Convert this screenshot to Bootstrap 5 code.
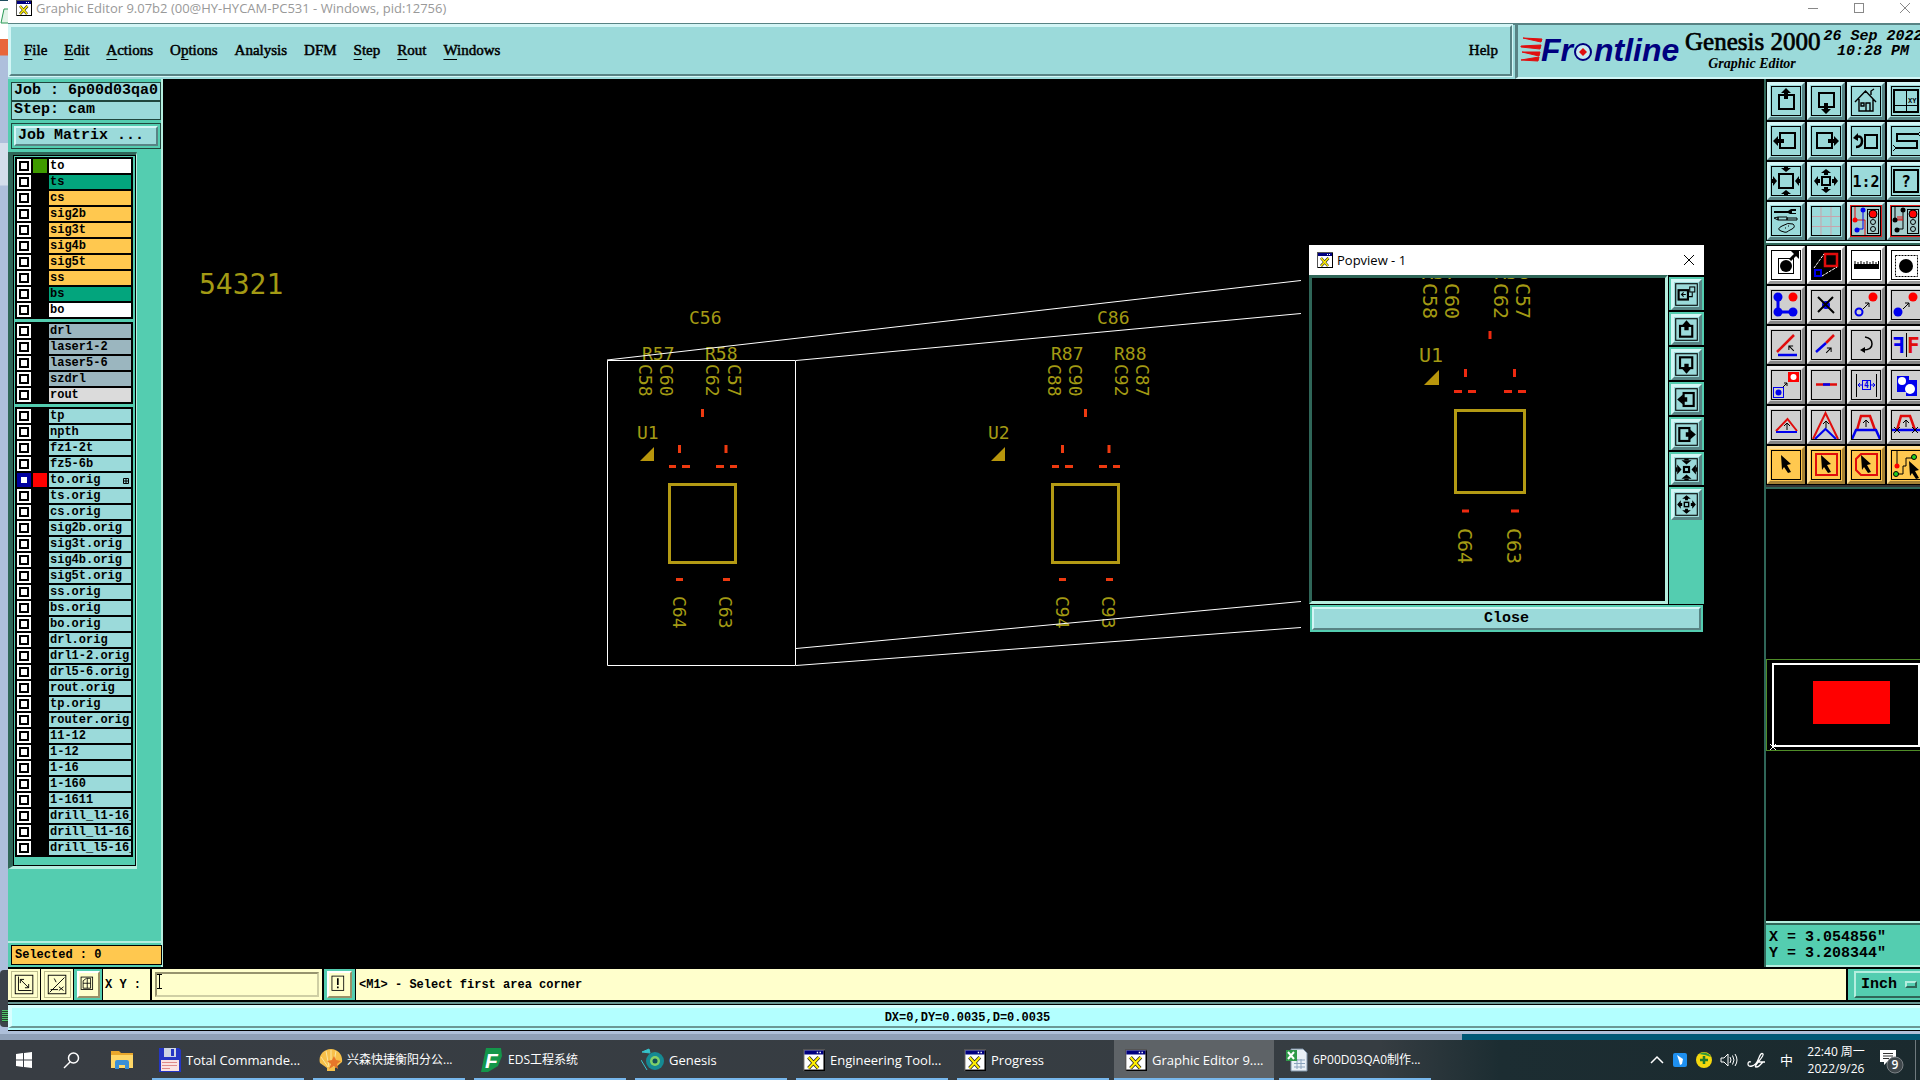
<!DOCTYPE html>
<html lang="zh-CN">
<head>
<meta charset="utf-8">
<meta name="viewport" content="width=device-width, initial-scale=1">
<title>Graphic Editor</title>
<link href="https://cdn.jsdelivr.net/npm/bootstrap@5.3.0/dist/css/bootstrap.min.css" rel="stylesheet">
<style>
:root{--teal:#54cdb0;--teal-hi:#b5eedf;--teal-lo:#2f6658;--aqua:#9bdada;--aqua-hi:#d3f6f6;--aqua-lo:#588384;--cream:#ffffcc;--gold:#ffc84f}
body{background:#aebfd9;font-family:"Open Sans","Noto Sans CJK SC",sans-serif;font-size:13px;line-height:16px;color:#000;overflow:hidden}
button,input,select{border-radius:0;color:inherit}
.mono{font-family:"Liberation Mono",monospace;font-weight:700;font-size:15px;line-height:16px}
.mono-sm{font-family:"Liberation Mono",monospace;font-weight:700;font-size:12px;line-height:14px}
.edge{width:8px;background:linear-gradient(#fff 0 39px,#e8663a 39px 55px,#aebfdc 56px 143px,#d4deec 143px 185px,#aebfdc 186px)}
.edge-meter{width:8px;height:57px;margin-bottom:4px;background:#3c434b;border-radius:4px 0 0 4px;padding:40px 0 4px 2px}
.edge-meter div{height:12px;background:repeating-linear-gradient(#4dc36a 0 1px,#26402f 1px 2px)}
.caption{height:23px;background:#fff;color:#999;padding:0 9px 7px 8px}
.caption button{background:none;border:0;padding:0;width:12px;height:14px;line-height:0}
.menubar{height:56px;background:var(--aqua);border-top:2px solid var(--aqua-lo)}
.menu-box{border:2px solid;border-color:var(--aqua-hi) var(--aqua-lo) var(--aqua-lo) var(--aqua-hi);outline:1px solid var(--aqua-hi);margin:0 3px 3px 1px;padding:0 12px 2px 13px}
.menu-box a{font-family:"Liberation Serif",serif;font-size:15px;line-height:18px;color:#000;text-decoration:none;-webkit-text-stroke:.5px #000}
.menu-box u{text-underline-offset:4px;text-decoration-thickness:1px}
.menu-gap{gap:17px}
.brand-box{width:405px;border-left:3px solid var(--aqua-lo);border-bottom:2px solid var(--aqua-hi);overflow:hidden}
.brand-title{font-family:"Liberation Serif",serif;font-size:25px;line-height:26px;-webkit-text-stroke:.7px #000}
.brand-sub{font-family:"Liberation Serif",serif;font-size:14px;line-height:18px;font-weight:700;font-style:italic}
.brand-date{font-style:italic;line-height:15px;width:100px}
.side{width:155px;background:var(--teal);border-right:2px solid var(--teal-hi)}
.side-top{padding:3px 0 3px 3px}
.jobinfo{border:1px solid #20463d;background:var(--aqua);height:19px;padding:0 2px;white-space:nowrap}
.matrix-frame{border:1px solid #20463d;padding:2px;margin-top:3px}
.motif{border:2px solid;border-color:var(--aqua-hi) var(--aqua-lo) var(--aqua-lo) var(--aqua-hi);background:var(--aqua);padding:0 2px}
.layers-outer{background:var(--teal);border:solid;border-width:3px 1px 3px 5px;border-color:var(--teal-lo) var(--teal-hi) var(--teal-hi) var(--teal-lo);width:129px}
.layers{border:1px solid #000;padding:1px 2px 8px 1px;gap:3px}
.layer-group{background:#000;padding:2px 2px 0 2px}
.layer{height:14px;margin-bottom:2px;gap:2px}
.layer input{appearance:none;margin:0;width:14px;height:14px;background:#fff;border:2px solid #fff;box-shadow:inset 0 0 0 2px #000;flex:none}
.layer input:checked{border-color:#0000a0;box-shadow:inset 0 0 0 2px #0000a0}
.layer .swatch{width:14px;flex:none}
.layer label{flex:1;overflow:hidden;white-space:nowrap;padding-left:1px;height:14px}
.l-w{background:#fff}.l-g{background:#03a57d}.l-o{background:var(--gold)}.l-s{background:#9bb6bf}.l-n{background:#dbdbdb}.l-c{background:var(--aqua)}
.selcount{border:1px solid #000;background:var(--gold);height:20px;padding:2px 3px}
.selwrap{border-top:2px solid var(--teal-hi);padding:2px 0 2px 3px;margin-right:-1px}
.stage{background:#000;position:relative;flex:1;overflow:hidden}
.stage svg.board,.pop svg.board,.mini svg{display:block;width:100%;height:100%}
.board text{font-family:"DejaVu Sans Mono",monospace;font-size:18px;fill:#a39a14}
.tools{width:156px;background:#000;border-left:2px solid var(--teal-lo);overflow:hidden}
.toolgrid{width:162px;display:flex;flex-wrap:wrap;gap:2px;padding:3px 0 0 1px}
.toolbreak{border:solid;border-width:2px 0;border-color:var(--aqua-hi) transparent var(--teal-lo);height:4px;background:var(--teal);margin-top:1px}
.tool{width:38px;height:38px;padding:1px;border:3px solid;line-height:0}
.t-a{background:var(--aqua);border-color:var(--aqua-hi) var(--aqua-lo) var(--aqua-lo) var(--aqua-hi)}
.t-w{background:#fff;border-color:#fff #999 #999 #fff}
.t-g{background:#cfcfcf;border-color:#eee #858585 #858585 #eee}
.t-o{background:var(--gold);border-color:#ffe09a #a58235 #a58235 #ffe09a}
.t-r{background:#e02020}
.tool text,.ptool text{font-family:"DejaVu Sans Mono",monospace;font-weight:700}
.mini{flex:1}
.coords{height:46px;background:var(--teal);border:solid;border-width:2px 0;border-color:var(--teal-hi);box-shadow:inset 0 2px var(--teal-lo);padding:7px 3px 0;white-space:pre}
.statusbar{background:var(--cream);border-top:2px solid #000;border-bottom:2px solid #000;height:35px;overflow:hidden}
.statusbar>*{border-right:2px solid #000;flex:none}
.statusbar .sbtn{background:var(--cream);border:0;border-right:1px solid #000;padding:0;width:33px;line-height:0}
.statusbar .sbtn-on{background:var(--teal);width:29px}
.statusbar .sbtn-alert{width:32px}
.sbtn svg{background:var(--cream);border:1px solid #bdbd8e}
.sbtn-on svg{border:2px solid;border-color:#fff #999168 #999168 #fff}
.xyinput{width:172px;padding:3px}
.xyinput input{width:100%;height:25px;border:2px solid;border-color:#97946e #cfcfa4 #cfcfa4 #97946e;background:var(--cream);padding:0 4px;outline:0}
.ibeam{position:absolute;left:3px;top:5px}
.unit{width:72px;background:var(--teal);padding:2px 0 2px 6px;border-right:0!important;position:relative}
.unit select{appearance:none;width:80px;height:27px;background:var(--teal);border:2px solid;border-color:var(--teal-hi) var(--teal-lo) var(--teal-lo) var(--teal-hi);padding:0 5px}
.unit span{position:absolute;right:3px;top:12px;width:12px;height:7px;border:2px solid;border-color:var(--teal-hi) var(--teal-lo) var(--teal-lo) var(--teal-hi)}
.cyanbar{background:#b3ffff;border:solid;border-width:2px 0 1px;border-color:#6b9895 transparent #000;padding:1px 0 2px;height:29px;box-shadow:inset 0 1px #000}
.cyanbar div{height:23px;border:solid;border-width:3px 0 2px 4px;border-color:#d8ffff #6b9895 #6b9895 #d8ffff;padding:2px 0 0 3px}
.under{height:6px;margin-top:3px;background:linear-gradient(90deg,#8fa0b8 1462px,#005876 1462px)}
.task{height:40px;background:linear-gradient(90deg,#383d43 0,#363d42 1380px,#1c2d32 1500px,#1b2a2e);color:#fff;gap:9px}
.task button{background:none;border:0;color:#fff;padding:0}
.tbtn{width:152px;height:40px;border-bottom:2px solid #77b7ec!important;padding:1px 0 0 6px!important;white-space:nowrap;gap:4px;flex:none}
.tbtn-on{background:#5e6367!important;width:160px;margin:0 -4px;padding-left:10px!important}
.cjk-sm{font-size:12px}
.pinned{padding:0 18px 0 16px;gap:31px;width:143px}
.tray{gap:8px;padding-right:4px}
.clock{font-size:12px;line-height:17px;width:62px}
.pop{position:absolute;left:1146px;top:166px;width:395px;background:#000}
.pop-cap{height:30px;background:#fff;padding:0 9px 0 8px}
.pop-cap button{background:none;border:0;padding:0;line-height:0}
.pop-stage{flex:1;height:329px;border:3px solid;border-color:var(--teal-lo) var(--teal-hi) var(--teal-hi) var(--teal-lo);background:#000}
.pop-tools{width:36px;background:var(--teal);border-left:1px solid #000}
.ptool{width:35px;height:35px;padding:1px 1px 0;border:solid #000;border-width:2px 0 0;background:var(--teal);line-height:0}
.ptool svg{background:var(--aqua);border:3px solid;border-color:var(--aqua-hi) var(--aqua-lo) var(--aqua-lo) var(--aqua-hi);padding:1px}
.pop-foot{background:var(--teal);border:1px solid #000;padding:2px;height:29px}
.pop-foot button{padding-top:1px}
.pop .board text{font-size:20px}
</style>
</head>
<body>
<div class="d-flex flex-column min-vh-100">
<div class="d-flex flex-grow-1">
  <div class="edge d-flex flex-column justify-content-between"><svg width="8" height="26"><path d="M0 0h8v1H0z" fill="#1d4d5c"/><path d="M8 9H4L1 23h7" fill="#e3f3e8" stroke="#2a9a57"/></svg><div class="edge-meter"><div></div></div></div>
  <div class="d-flex flex-column flex-grow-1 overflow-hidden">
    <header class="caption d-flex align-items-center">
      <svg width="16" height="16" class="me-1"><use href="#xwin"/></svg>
      <span class="flex-grow-1">Graphic Editor 9.07b2 (00@HY-HYCAM-PC531 - Windows, pid:12756)</span>
      <div class="d-flex" style="gap:34px">
        <button aria-label="Minimize"><svg width="10" height="12"><path d="M0 6.500h10" stroke="#888"/></svg></button>
        <button aria-label="Maximize"><svg width="11" height="12"><rect x=".5" y="1.500" width="9" height="9" fill="none" stroke="#888"/></svg></button>
        <button aria-label="Close window"><svg width="12" height="12"><path d="M1 1l10 10M11 1L1 11" stroke="#888"/></svg></button>
      </div>
    </header>
    <div class="menubar d-flex">
      <nav class="menu-box flex-grow-1 d-flex align-items-center menu-gap">
        <a href="#"><u>F</u>ile</a><a href="#"><u>E</u>dit</a><a href="#"><u>A</u>ctions</a><a href="#">O<u>p</u>tions</a><a href="#">Analysis</a><a href="#">DFM</a><a href="#"><u>S</u>tep</a><a href="#"><u>R</u>out</a><a href="#"><u>W</u>indows</a>
        <a href="#" class="ms-auto">Help</a>
      </nav>
      <div class="brand-box d-flex">
        <svg width="167" height="48" viewBox="1518 26 167 48" class="flex-shrink-0" aria-label="Frontline">
          <path d="M1523 39l19 1-1 3zM1521 47l20-1-1 4-19-2zM1522 53l18 0-1 4zM1521 61l18-3-1 4z" fill="#e01010" stroke="#e01010"/>
          <g font-family="Liberation Sans,sans-serif" font-weight="700" font-style="italic" font-size="32" fill="#00007f"><text x="1541" y="62">Fr</text><text x="1594" y="62">ntline</text></g>
          <circle cx="1583" cy="53" r="8" fill="#c8ecf0" stroke="#00007f" stroke-width="2"/><path d="M1583 49l4 4-4 4-4-4z" fill="#e01010"/>
        </svg>
        <div class="text-center flex-shrink-0 pt-1" style="width:134px"><div class="brand-title text-nowrap">Genesis 2000</div><div class="brand-sub">Graphic Editor</div></div>
        <div class="mono brand-date flex-shrink-0 ms-1 pt-1 text-center text-nowrap">26 Sep 2022<br>10:28 PM</div>
      </div>
    </div>

    <div class="d-flex flex-grow-1">
      <aside class="side d-flex flex-column">
        <div class="mono side-top">
          <div class="jobinfo">Job : 6p00d03qa0</div>
          <div class="jobinfo">Step: cam</div>
          <div class="matrix-frame"><button class="motif mono w-100 text-start d-block">Job Matrix ...</button></div>
        </div>
        <div class="layers-outer"><div class="layers d-flex flex-column mono-sm" id="layers"></div></div>
        <div class="flex-grow-1"></div>
        <div class="selwrap mono-sm"><div class="selcount">Selected : 0</div></div>
      </aside>

      <main class="stage">
        <svg class="board" style="position:absolute" aria-label="PCB canvas"><g transform="translate(-163 -79)">
          <text x="199" y="294" style="font-size:28px">54321</text>
          <g id="cells"></g>
          <path d="M607.500 360.500H795.500V665.500H607.500zM607 360L1301 280.500M796 360.500L1301 313.500M796 648.500L1301 601.500M796 665.500L1301 627.500" fill="none" stroke="#fff"/>
        </g></svg>
        <section class="pop">
          <div class="pop-cap d-flex align-items-center"><svg width="16" height="16" class="me-1"><use href="#xwin"/></svg><span class="flex-grow-1">Popview - 1</span>
            <button aria-label="Close popview"><svg width="12" height="12"><path d="M1 1l10 10M11 1L1 11" stroke="#000"/></svg></button></div>
          <div class="d-flex"><div class="pop-stage"><svg class="board" aria-label="Zoomed view"><g transform="translate(-1312 -278)">
            <text x="1421" y="279">R57</text><text x="1494" y="279">R58</text>
            <text transform="translate(1423 283) rotate(90)">C58</text><text transform="translate(1445 283) rotate(90)">C60</text><text transform="translate(1494 283) rotate(90)">C62</text><text transform="translate(1516 283) rotate(90)">C57</text>
            <text x="1419" y="362">U1</text>
            <path d="M1424 385l15-15v15z" fill="#b8960c"/><rect x="1455.500" y="410.500" width="69" height="82" fill="none" stroke="#b39a14" stroke-width="3"/>
            <path d="M1490 331v8M1465.500 369v8M1514.500 369v8M1454 391.500h8M1468 391.500h8M1504 391.500h8M1518 391.500h8M1462 511h7M1511 511h8" stroke="#ee2a10" stroke-width="3"/>
            <text transform="translate(1458 528) rotate(90)">C64</text><text transform="translate(1507 528) rotate(90)">C63</text>
          </g></svg></div><div class="pop-tools" id="ptools"></div></div>
          <div class="pop-foot"><button class="motif mono w-100 h-100 d-block text-center">Close</button></div>
        </section>
      </main>

      <aside class="tools d-flex flex-column">
        <div class="toolgrid" id="tools1"></div>
        <div class="toolbreak"></div>
        <div class="toolgrid" id="tools2" style="padding-top:1px"></div>
        <div class="toolbreak" style="border-top-color:#333"></div>
        <div class="mini"><svg aria-label="Overview"><g transform="translate(-1766 -489)">
          <rect x="1766.500" y="659.500" width="160" height="91" fill="none" stroke="#4f8c28"/>
          <rect x="1773" y="664" width="146" height="82" fill="none" stroke="#fff" stroke-width="2"/>
          <rect x="1813" y="681" width="77" height="43" fill="red"/>
          <path d="M1770 744l6 6M1776 744l-6 6" stroke="#fff"/>
        </g></svg></div>
        <div class="coords mono">X = 3.054856"
Y = 3.208344"</div>
      </aside>
    </div>

    <div class="statusbar d-flex align-items-stretch mono-sm">
      <button class="sbtn" aria-label="Snap to corner"><svg width="27" height="27" viewBox="0 0 27 27"><rect x="3.500" y="3.500" width="19" height="20" fill="none" stroke="#000"/><path d="M7 5v15h14M9 8l9 9M9 12V8h4M18 13v4h-4" fill="none" stroke="#000"/></svg></button>
      <button class="sbtn" aria-label="Angle"><svg width="27" height="27" viewBox="0 0 27 27"><rect x="3.500" y="3.500" width="19" height="20" fill="none" stroke="#000"/><path d="M5 22L21 6M6 19h8M10 7l2 4M15 16l5 4M20 16l-5 4" fill="none" stroke="#000"/></svg></button>
      <button class="sbtn sbtn-on" aria-label="Grid"><svg width="23" height="27" viewBox="0 0 23 27"><rect x="2.500" y="4.500" width="14" height="15" fill="none" stroke="#000"/><path d="M5 18V9l4-3h5v12zM10 6v12M5 12h9" fill="none" stroke="#000"/></svg></button>
      <label for="xy" class="d-flex align-items-center" style="width:49px;padding-left:2px">X&nbsp;Y&nbsp;:</label>
      <div class="xyinput position-relative"><input id="xy" type="text" class="mono-sm" value="" autocomplete="off"><svg class="ibeam" width="9" height="16"><path d="M2 .5h5M2 14.500h5M4.500 1v13" stroke="#000" fill="none"/></svg></div>
      <button class="sbtn sbtn-on sbtn-alert" aria-label="Alert"><svg width="25" height="27" viewBox="0 0 25 27"><rect x="3.500" y="3.500" width="14" height="17" fill="none" stroke="#000"/><path d="M10.500 6v8M10.500 16v2" stroke="#000" stroke-width="2"/></svg></button>
      <div class="flex-grow-1 flex-shrink-1 d-flex align-items-center" style="padding-left:3px">&lt;M1&gt; - Select first area corner</div>
      <div class="unit"><select class="mono" aria-label="Units"><option>Inch</option></select><span></span></div>
    </div>
    <div class="cyanbar mono-sm"><div class="d-flex align-items-center justify-content-center">DX=0,DY=0.0035,D=0.0035</div></div>
  </div>
</div>
<div class="under"></div>
<footer class="task d-flex align-items-center">
  <div class="pinned d-flex align-items-center">
    <button aria-label="Start"><svg width="16" height="16" class="d-block"><path d="M0 2l7-1v6.500H0zM8 1l8-1v7.500H8zM0 8.500h7V15l-7-1zM8 8.500h8V16l-8-1z" fill="#fff"/></svg></button>
    <button aria-label="Search"><svg width="17" height="17" class="d-block"><circle cx="10.500" cy="6" r="5" fill="none" stroke="#fff" stroke-width="1.500"/><path d="M7 10l-6 6" stroke="#fff" stroke-width="1.500"/></svg></button>
    <button aria-label="File Explorer"><svg width="22" height="20" class="d-block"><path d="M0 1h8l2 2h12v15H0z" fill="#e9a72c"/><path d="M0 5h22v13H0z" fill="#ffd767"/><path d="M4 19v-7q0-2 2-2h10q2 0 2 2v7h-4v-4H8v4z" fill="#3a8fd6"/></svg></button>
  </div>
  <button class="tbtn d-flex align-items-center"><svg width="24" height="24"><path d="M1 0h20l2 2v22H1z" fill="#2536c4"/><path d="M6 0h12v9H6z" fill="#cfd6e4"/><path d="M13 1h3v7h-3z" fill="#2536c4"/><path d="M3 12h18v11H3z" fill="#fbe3e3"/><path d="M4 14.500h15M4 17.500h15M4 20.500h8" stroke="#e08a8a"/></svg><span>Total Commande...</span></button>
  <button class="tbtn d-flex align-items-center"><svg width="24" height="24"><path d="M12 1C4 1-1 8 1 15l7 5v3h8v-3l7-6C24 7 19 1 12 1z" fill="#f7c04a"/><path d="M12 2v17M7 3l3 16M17 3l-3 16M2 9l7 10" stroke="#fbe6a0" fill="none"/><path d="M15 8l2 4 5 1-4 3 1 5-4-3-5 3 2-5-4-3 5-1z" fill="#e8762a"/></svg><span class="cjk-sm">兴森快捷衡阳分公...</span></button>
  <button class="tbtn d-flex align-items-center"><svg width="24" height="24"><path d="M6 0h15l1 8-4 10-10 6H1z" fill="#14964a"/><text x="5" y="20" font-family="Liberation Sans" font-size="21" font-weight="700" font-style="italic" fill="#fff">F</text></svg><span class="cjk-sm">EDS工程系统</span></button>
  <button class="tbtn d-flex align-items-center"><svg width="24" height="24"><circle cx="14" cy="13" r="9" fill="#158a93"/><circle cx="14" cy="13" r="5" fill="#7fd06a"/><circle cx="14" cy="13" r="2.500" fill="#0c4d5c"/><path d="M1 4l7-3 1 4zM0 12l6 10" stroke="#35c4cc" fill="#35c4cc"/></svg><span>Genesis</span></button>
  <button class="tbtn d-flex align-items-center"><svg width="24" height="22"><use href="#xwin"/></svg><span>Engineering Tool...</span></button>
  <button class="tbtn d-flex align-items-center"><svg width="24" height="22"><use href="#xwin"/></svg><span>Progress</span></button>
  <button class="tbtn tbtn-on d-flex align-items-center"><svg width="24" height="22"><use href="#xwin"/></svg><span>Graphic Editor 9....</span></button>
  <button class="tbtn d-flex align-items-center"><svg width="24" height="24"><path d="M6 1h12l4 4v18H6z" fill="#e9f0f6" stroke="#7f93a8"/><path d="M9 12h11M9 15.500h11M9 19h11M12 11v10M16 11v10" stroke="#8aa3bd"/><path d="M1 2h11v11H1z" fill="#2f9a49"/><path d="M3 4l6 7M9 4l-6 7" stroke="#fff" stroke-width="2"/></svg><span class="cjk-sm">6P00D03QA0制作...</span></button>
  <div class="tray ms-auto d-flex align-items-center">
    <button aria-label="Show hidden icons"><svg width="14" height="14" class="d-block"><path d="M1 10l6-6 6 6" fill="none" stroke="#fff" stroke-width="1.500"/></svg></button>
    <svg width="16" height="16"><rect x="1" y="1" width="14" height="14" rx="2" fill="#1e90f0"/><path d="M5 3l6 4-1 5-2 1-1-4z" fill="#fff"/></svg>
    <svg width="16" height="16"><circle cx="8" cy="8" r="8" fill="#f4d80e"/><path d="M3 2a8 8 0 0 1 12 3L9 3z" fill="#2f9a3a"/><path d="M8 4v8M4 8h8" stroke="#207a2a" stroke-width="2.500"/></svg>
    <button aria-label="Volume"><svg width="18" height="16" class="d-block"><path d="M1 6h3l4-4v12l-4-4H1zM10 5q2 3 0 6M12.500 3.500q3 4.500 0 9M15 2q4 6 0 12" fill="none" stroke="#fff"/></svg></button>
    <svg width="22" height="16"><path d="M5 10q-3-1-3 2t4 2 6-6 3-6 2 0-4 7-3 6 3-1 4-4M11 10h8" fill="none" stroke="#fff" stroke-width="1.300"/></svg>
    <span class="px-1">中</span>
    <div class="clock text-center">22:40 周一<br>2022/9/26</div>
    <button aria-label="Notifications" class="ms-1"><svg width="28" height="28" class="d-block"><path d="M1 4h16v12h-9l-3 3v-3H1z" fill="#fff"/><path d="M4 7.500h10M4 10h10M4 12.500h6" stroke="#333"/><circle cx="16" cy="19" r="8" fill="#3f474b" stroke="#7b8185"/><text x="16" y="23" text-anchor="middle" font-size="12" font-weight="600" fill="#fff">9</text></svg></button>
    <div style="border-left:1px solid #6f7a7e;height:40px"></div>
  </div>
</footer>
</div>

<svg width="0" height="0" class="position-absolute"><defs><symbol id="xwin" viewBox="0 0 16 16"><rect x=".5" y=".5" width="15" height="15" fill="#fff" stroke="#555"/><path d="M1 1h14v3H1z" fill="#000080"/><path d="M10 2.500h1M12 2.500h1" stroke="#fff"/><path d="M4 6l7 8M11.500 6L4 14" stroke="#222" stroke-width="2.600"/><path d="M4 6l7 8M11.500 6L4 14" stroke="#ffee00" stroke-width="1.500"/><path d="M15.500 1v15M1 15.500h15" stroke="#000"/></symbol></defs></svg>

<script>
// Layer list: [name, colour class, swatch colour]
const groups=[
 [['to','w','#3f9b00'],['ts','g'],['cs','o'],['sig2b','o'],['sig3t','o'],['sig4b','o'],['sig5t','o'],['ss','o'],['bs','g'],['bo','w']],
 [['drl','s'],['laser1-2','s'],['laser5-6','s'],['szdrl','s'],['rout','n']],
 ['tp','npth','fz1-2t','fz5-6b','to.orig','ts.orig','cs.orig','sig2b.orig','sig3t.orig','sig4b.orig','sig5t.orig','ss.orig','bs.orig','bo.orig','drl.orig','drl1-2.orig','drl5-6.orig','rout.orig','tp.orig','router.orig','11-12','1-12','1-16','1-160','1-1611','drill_l1-16_','drill_l1-16_','drill_l5-16_'].map(n=>[n,'c',n=='to.orig'?'red':''])
];
let n=0;
document.getElementById('layers').innerHTML=groups.map(g=>'<div class="layer-group">'+g.map(([t,c,s])=>{n++;const on=t=='to.orig';
 return `<div class="layer d-flex"><input type="checkbox" id="l${n}"${on?' checked':''}><div class="swatch" style="background:${s||'#000'}"></div><label for="l${n}" class="l-${c}${on?' d-flex justify-content-between':''}">${t}${on?'<svg width="8" height="14"><path d="M.5 5.500h5v5h-5zM3 5v6M0 8h6" fill="none" stroke="#000"/></svg>':''}</label></div>`}).join('')+'</div>').join('');

// Two footprints on the board
const v=(x,y,t)=>`<text transform="translate(${x} ${y}) rotate(90)">${t}</text>`, h=(x,y,t)=>`<text x="${x}" y="${y}">${t}</text>`;
const cell=(d,u,T)=>h(689+d+(d?25:0),324,T[0])+h(642+d+(d?26:0),360,T[1])+h(705+d+(d?26:0),360,T[2])
 +v(639+d+(d?26:0),364,T[3])+v(660+d+(d?26:0),364,T[4])+v(706+d+(d?26:0),364,T[5])+v(728+d+(d?25:0),364,T[6])
 +h(637+u,439,T[7])+v(673+d,596,T[8])+v(719+d,596,T[9])
 +`<path d="M${640+u} 461l14-14v14z" fill="#b8960c"/><rect x="${669.5+d}" y="484.500" width="66" height="78" fill="none" stroke="#b39a14" stroke-width="3"/>`
 +`<path transform="translate(${d} 0)" d="M702.500 409v8M679.500 445v8M726 445v8M669 466.500h7M682 466.500h8M716 466.500h8M730 466.500h7M676 579.500h7M723 579.500h7" stroke="#ee3a10" stroke-width="3"/>`;
document.getElementById('cells').innerHTML=cell(0,0,['C56','R57','R58','C58','C60','C62','C57','U1','C64','C63'])+cell(383,351,['C86','R87','R88','C88','C90','C92','C87','U2','C94','C93']);

// Tool icons, each on a 30 x 30 grid
const k='fill="none" stroke="#000"', B='stroke="#0000ee"', R='stroke="#e00c0c"';
const arrU='<path d="M15 2l5 5h-3v6h-4V7h-3z"/>';
const rot=(a,s)=>`<g transform="rotate(${a} 15 15)">${s}</g>`;
const tin='<path d="M10 2h10l-5 4z"/><path d="M13 0h4v2h-4z"/>', tout='<path d="M15 3l5 4h-3v2h-4V7h-3z"/>';
const sm=(x,y,a)=>`<g transform="translate(${x} ${y}) rotate(${a})"><path d="M0 4V-3M-3 0l3-3 3 3" ${k}/></g>`;
const light=`<rect x="16.500" y="3.500" width="11" height="24" ${k}/><circle cx="22" cy="8" r="4" fill="red" stroke="#000"/><circle cx="22" cy="16" r="2.500" ${k}/><circle cx="22" cy="23" r="2.500" ${k}/>`;
const cur='<path d="M10 5l10 9-4 1 4 7-3 1-4-6-2 3z"/>';
const four=s=>[0,90,180,270].map(a=>rot(a,s)).join('');
const set1=[
 `<rect x="8" y="9" width="15" height="14" ${k} stroke-width="2"/>`+arrU,
 `<rect x="8" y="7" width="15" height="14" ${k} stroke-width="2"/>`+rot(180,arrU),
 `<path d="M4 16L14.500 5 25 16M8 13v12h14V13M20 9V5l3-2M10 17h3v3h-3zM15 25v-8h4v8" ${k} stroke-width="1.400"/>`,
 `<rect x="3" y="4" width="24" height="22" ${k} stroke-width="2"/><path d="M15.500 4v22M3 19.500h24" ${k}/><text x="17" y="17" font-size="7">XY</text>`,
 `<rect x="9" y="7" width="15" height="15" ${k} stroke-width="2"/>`+rot(-90,arrU),
 `<rect x="6" y="7" width="15" height="15" ${k} stroke-width="2"/>`+rot(90,arrU),
 `<rect x="14" y="9" width="12" height="13" ${k} stroke-width="2"/><path d="M5 11q6-2 6 4t-6 6" ${k} stroke-width="2.500"/><path d="M2 12l5-5v8z"/>`,
 `<path d="M27 8H6v7h20v7H5" ${k} stroke-width="2"/><path d="M27 8l3-3M27 8l3 3M5 22l-3-3M5 22l-3 3" ${k}/>`,
 `<rect x="8" y="8" width="14" height="14" ${k} stroke-width="2"/>`+four(tin),
 `<rect x="11" y="11" width="8" height="8" ${k} stroke-width="2"/>`+four(tout),
 `<text x="15" y="21" font-size="15" text-anchor="middle">1:2</text>`,
 `<rect x="3" y="4" width="24" height="22" ${k} stroke-width="2"/><text x="15" y="21" font-size="16" text-anchor="middle">?</text>`,
 `<path d="M3 5h14l3-2h5v2h-4v2h4v1h-6l-2-1H3z"/><path d="M3 12l4-1v3zM7 11h9v3H7zM16 12h10v2H16z" ${k}/><path d="M11 20q6-4 11-2 3 3-1 5t-5 3-6-1 1-5zM14 22h1M17 20h1" ${k}/>`,
 `<path d="M10 0v30M20 0v30M0 10.500h30M0 20.500h30" stroke="#c9a3ab" fill="none"/>`,
 `<path d="M4 0v14h10v16" fill="none" ${R}/><path d="M12 4v19H6" fill="none" ${B}/><circle cx="4" cy="14" r="2.500" fill="red"/><circle cx="12" cy="4" r="2.500" fill="#00e"/><circle cx="6" cy="24" r="2.500" fill="#00e"/>`+light,
 `<path d="M4 0v14M12 4v19H6" ${k}/><path d="M6 14h6M7 10v4M9 10v4M11 10v4" ${R}/><circle cx="4" cy="14" r="2.500"/><circle cx="12" cy="4" r="2.500"/><circle cx="6" cy="24" r="2.500"/>`+light
];
const f=`<g font-size="21"><text x="16" y="23" fill="#e00c0c">F</text><text transform="translate(14 23) scale(-1 1)" fill="#00e">F</text></g>`;
const trap=`<path d="M6 20l4-14h9l5 14" fill="none" ${R} stroke-width="2.500"/>`+sm(15,13,0);
const set2=[
 `<rect x="7.500" y="8.500" width="15" height="15" ${k}/><circle cx="15" cy="16" r="6"/><path d="M19 10l6-6" stroke="#000" stroke-width="3"/><path d="M20 1h8v8z"/>`,
 `<path d="M0 0h30v30H0z"/><rect x="14" y="4" width="12" height="12" fill="none" ${R} stroke-width="2.500"/><rect x="4" y="20" width="6" height="6" fill="none" ${B} stroke-width="2"/><path d="M3 18L13 4M11 26l15-9" stroke="#fff" stroke-dasharray="3 1"/>`,
 `<path d="M3 14h25v5H3z"/><path d="M4 11v4M7 12v3M10 11v4M13 12v3M16 11v4M19 12v3M22 11v4M25 12v3M27.500 11v4" stroke="#000"/>`,
 `<rect x="4.500" y="5.500" width="22" height="21" ${k} stroke-dasharray="2 1"/><circle cx="15" cy="16" r="7"/>`,
 `<path d="M7 7v15h15" fill="none" ${B} stroke-width="3"/><g fill="#00e"><circle cx="7" cy="7" r="4.500"/><circle cx="7" cy="22" r="4.500"/><circle cx="22" cy="22" r="4.500"/></g><circle cx="22" cy="7" r="4.500" fill="red"/>`,
 `<circle cx="15" cy="15" r="4" fill="#00e"/><path d="M7 7l16 16M22 7L7 22" ${k} stroke-width="2"/>`,
 `<circle cx="8" cy="22" r="3.500" fill="none" ${B} stroke-width="2"/><circle cx="22" cy="7" r="4.500" fill="red"/><path d="M12 19l6-6M14 13h4v4" ${k}/>`,
 `<circle cx="7" cy="22" r="4.500" fill="#00e"/><circle cx="22" cy="7" r="4.500" fill="red"/><path d="M12 19l6-6M14 13h4v4" ${k}/>`,
 `<path d="M6 22L23 5" ${R} stroke-width="2.500"/><path d="M7 25h19" ${B} stroke-width="2.500"/>`+sm(20,18,-45),
 `<path d="M15 13l8-8" ${R} stroke-width="2.500"/><path d="M5 22l10-9" ${B} stroke-width="2.500"/>`+sm(18,20,45),
 `<path d="M14 7q7 1 7 7t-9 6" ${k} stroke-width="1.500"/><path d="M9 20l5-3v6z"/>`,
 f+`<path d="M15.500 3v24" ${k}/>`,
 `<rect x="2.500" y="17.500" width="10" height="10" fill="none" ${B}/><circle cx="7.500" cy="22.500" r="3" fill="#00e"/><path d="M17 2h11v10H17z" fill="red"/><circle cx="22.500" cy="7" r="3" fill="#fff"/><path d="M12 17l4-4M13 13h3v3" ${k}/>`,
 `<path d="M5 14.500h21" ${R} stroke-width="2.500"/><path d="M12 14.500h7" ${B} stroke-width="2.500"/>`,
 `<path d="M5.500 4v23M25.500 4v23" ${k}/><g fill="none" ${B}><rect x="11.500" y="10.500" width="8" height="9"/><path d="M7 15h4M20 15h4M9 13l-2 2 2 2M22 13l2 2-2 2"/></g><text x="13" y="18" font-size="8" fill="#00e">4</text>`,
 `<path d="M6 6h12v4h8v16H15v-4H6z" fill="#00e"/><circle cx="11" cy="11" r="4" fill="#fff"/><circle cx="19" cy="19" r="5" fill="#fff"/>`,
 `<path d="M5 21L16.500 9 26 21" fill="none" ${R} stroke-width="2"/><path d="M5 22h21" ${B} stroke-width="2"/>`+sm(16,16,0),
 `<path d="M2 29L14.500 3 27 29" fill="none" ${R} stroke-width="2"/><path d="M4 29l10.500-10L25 29" fill="none" ${B} stroke-width="2"/>`+sm(15,14,0),
 trap+`<path d="M1 29l4-9h20l4 9" fill="none" ${B} stroke-width="2.500"/>`,
 trap+`<path d="M1 20h28" ${B} stroke-width="2.500"/><path d="M3 17l6 6M9 17l-6 6M21 17l6 6M27 17l-6 6" ${k}/>`,
 cur,
 `<rect x="5" y="4" width="21" height="21" fill="none" ${R} stroke-width="2"/>`+cur,
 `<path d="M10 4h16v21H10l-5-5V9z" fill="none" ${R} stroke-width="2"/>`+cur,
 `<path d="M6 0v16M6 24h6v-8h3V8h7" ${k}/><circle cx="6" cy="16" r="2.500" fill="red"/><circle cx="5" cy="24" r="2.500" fill="#2c2" stroke="#000"/><circle cx="23" cy="7" r="2.500" fill="#2c2" stroke="#000"/><g transform="translate(8 6)">${cur}</g>`
];
const names='Pan up,Pan down,Home,XY window,Pan left,Pan right,Previous view,Serpentine,Zoom in,Zoom out,Scale,Info,Options,Grid,Net check,Net short,Select feature,Popview,Measure,Area,Connect,Delete,Copy,Move,Rotate,Extend,Undo,Mirror,Transfer,Merge,Spacing,Union,Reshape,Stretch,Trapezoid,Trim,Pointer,Frame select,Polygon select,Net select'.split(',');
const btn=(s,c,i)=>`<button class="tool ${c}" aria-label="${names[i]}"><svg width="30" height="30">${s}<rect x=".5" y=".5" width="29" height="29" ${k}/></svg></button>`;
document.getElementById('tools1').innerHTML=set1.map((s,i)=>btn(i>13?'<path d="M0 0h30v30H0z" fill="#a5cccc"/><path d="M-1-1h32v32H-1z" fill="none" stroke="#e02020" stroke-width="4"/>'+s:s,'t-a'+(i>13?' t-r':''),i)).join('');
document.getElementById('tools2').innerHTML=set2.map((s,i)=>btn(s,i<4?'t-w':i<20?'t-g':'t-o',i+16)).join('');

// Popview buttons use heavier arrows
const big='<path d="M15 2l7 8h-4v6h-6v-6H8z"/>', bin='<path d="M8 2h14l-7 6z"/><path d="M12 0h6v2h-6z"/>';
const box=(x,y)=>`<rect x="${x}" y="${y}" width="17" height="15" ${k} stroke-width="3"/>`;
const pop=[`<rect x="4" y="9" width="13" height="13" ${k} stroke-width="3"/><rect x="19.500" y="4.500" width="7" height="7" ${k} stroke-width="1.500"/><path d="M23 12v6h-5M14 15H8M11 12l-3 3 3 3" ${k} stroke-width="1.500"/>`,
 box(6,10)+big,box(6,5)+rot(180,big),
 `<rect x="11" y="6" width="14" height="18" ${k} stroke-width="3"/>`+rot(-90,big),`<rect x="5" y="6" width="14" height="18" ${k} stroke-width="3"/>`+rot(90,big),
 `<rect x="11.500" y="11.500" width="7" height="7" ${k} stroke-width="3"/>`+four(bin),`<rect x="12" y="12" width="6" height="6" ${k} stroke-width="2"/>`+four('<path d="M15 2l6 5h-4v2h-4V7H9z"/>')];
document.getElementById('ptools').innerHTML=pop.map((s,i)=>`<button class="ptool" aria-label="${['Detach','Up','Down','Left','Right','Zoom in','Zoom out'][i]}"><svg width="31" height="31" viewBox="-1 -1 32 32">${s}<rect x="0" y="0" width="30" height="30" ${k} stroke-width="1.500"/></svg></button>`).join('');
</script>
<script src="https://cdn.jsdelivr.net/npm/bootstrap@5.3.0/dist/js/bootstrap.bundle.min.js"></script>
</body>
</html>
